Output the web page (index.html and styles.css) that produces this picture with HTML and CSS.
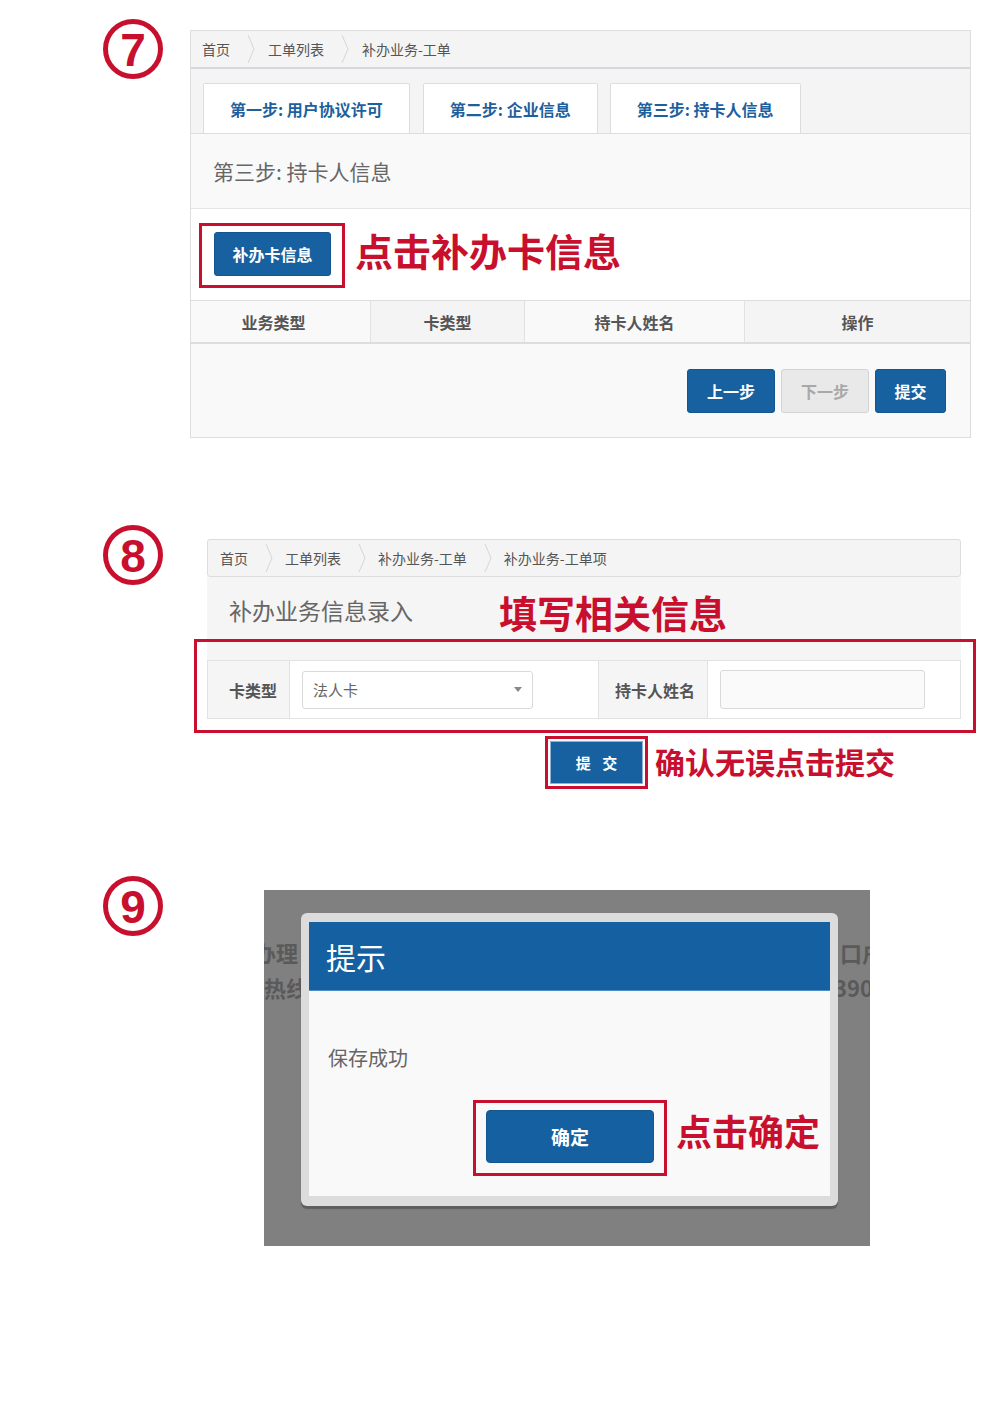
FILE: index.html
```html
<!DOCTYPE html>
<html lang="zh-CN">
<head>
<meta charset="utf-8">
<title>补办业务</title>
<link rel="stylesheet" href="styles.css">
</head>
<body>
<div class="page">

  <section class="step step7">
    <div class="num"><svg width="60" height="60" viewBox="0 0 60 60"><circle cx="30" cy="30" r="27.5" fill="none" stroke="#c8102e" stroke-width="5"/><text x="30" y="46.5" text-anchor="middle">7</text></svg></div>
    <div class="panel">
      <div class="crumb">
        <span>首页</span><svg class="sep" width="8" height="28" viewBox="0 0 8 28"><polyline points="1,0 7,14 1,28" fill="none" stroke="#d6d6d6" stroke-width="1"/></svg><span>工单列表</span><svg class="sep" width="8" height="28" viewBox="0 0 8 28"><polyline points="1,0 7,14 1,28" fill="none" stroke="#d6d6d6" stroke-width="1"/></svg><span>补办业务-工单</span>
      </div>
      <div class="tabs">
        <div class="tab">第一步: 用户协议许可</div>
        <div class="tab">第二步: 企业信息</div>
        <div class="tab">第三步: 持卡人信息</div>
      </div>
      <div class="panel-title">第三步: 持卡人信息</div>
      <div class="action-row">
        <div class="redbox rb1"><button class="btn btn-blue add">补办卡信息</button></div>
        <span class="note note1">点击补办卡信息</span>
      </div>
      <div class="thead">
        <div class="th">业务类型</div><div class="th alt">卡类型</div><div class="th">持卡人姓名</div><div class="th alt">操作</div>
      </div>
      <div class="panel-foot">
        <button class="btn btn-blue w88">上一步</button>
        <button class="btn btn-dis w88">下一步</button>
        <button class="btn btn-blue w71">提交</button>
      </div>
    </div>
  </section>

  <section class="step step8">
    <div class="num"><svg width="60" height="60" viewBox="0 0 60 60"><circle cx="30" cy="30" r="27.5" fill="none" stroke="#c8102e" stroke-width="5"/><text x="30" y="46.5" text-anchor="middle">8</text></svg></div>
    <div class="body8">
      <div class="crumb crumb8">
        <span>首页</span><svg class="sep" width="8" height="28" viewBox="0 0 8 28"><polyline points="1,0 7,14 1,28" fill="none" stroke="#d6d6d6" stroke-width="1"/></svg><span>工单列表</span><svg class="sep" width="8" height="28" viewBox="0 0 8 28"><polyline points="1,0 7,14 1,28" fill="none" stroke="#d6d6d6" stroke-width="1"/></svg><span>补办业务-工单</span><svg class="sep" width="8" height="28" viewBox="0 0 8 28"><polyline points="1,0 7,14 1,28" fill="none" stroke="#d6d6d6" stroke-width="1"/></svg><span>补办业务-工单项</span>
      </div>
      <div class="title8">
        <span class="t">补办业务信息录入</span>
        <span class="note note2">填写相关信息</span>
      </div>
      <div class="redbox rb2">
        <div class="strip"></div>
        <div class="form">
          <div class="lbl">卡类型</div>
          <div class="cell"><div class="select"><span>法人卡</span><i class="caret"></i></div></div>
          <div class="lbl">持卡人姓名</div>
          <div class="cell"><div class="input"></div></div>
        </div>
      </div>
      <div class="submit-row">
        <div class="redbox rb3"><button class="btn btn-blue sub">提 交</button></div>
        <span class="note note3">确认无误点击提交</span>
      </div>
    </div>
  </section>

  <section class="step step9">
    <div class="num"><svg width="60" height="60" viewBox="0 0 60 60"><circle cx="30" cy="30" r="27.5" fill="none" stroke="#c8102e" stroke-width="5"/><text x="30" y="46.5" text-anchor="middle">9</text></svg></div>
    <div class="overlay">
      <div class="bg-col left"><div class="l1">办理</div><div class="l2">热线</div></div>
      <div class="dialog">
        <div class="dhead">提示</div>
        <div class="dbody">
          <div class="msg">保存成功</div>
          <div class="drow">
            <div class="redbox rb4"><button class="btn btn-blue ok">确定</button></div>
            <span class="note note4">点击确定</span>
          </div>
        </div>
      </div>
      <div class="bg-col right"><div class="r1">口户</div><div class="r2">3900</div></div>
    </div>
  </section>

</div>
</body>
</html>
```

FILE: styles.css
```css
* { box-sizing: border-box; }
body {
  margin: 0;
  background: #fff;
  font-family: "Noto Sans CJK SC", "Liberation Sans", sans-serif;
  color: #555;
}
.page { padding: 19px 0 0 103px; height: 1415px; }
.step { display: flex; align-items: flex-start; }
.num { width: 60px; height: 60px; flex: none; }
.num svg { display: block; }
.num text {
  font-family: "Liberation Sans", "DejaVu Sans", sans-serif;
  font-weight: 700;
  font-size: 46px;
  fill: #c8102e;
}

.redbox { border: 3px solid #c8102e; background: #fff; }
.note {
  color: #c8102e;
  font-weight: 700;
  line-height: 1;
  white-space: nowrap;
}

.btn {
  display: flex;
  align-items: center;
  justify-content: center;
  height: 44px;
  padding: 0;
  border: 1px solid transparent;
  border-radius: 3px;
  font-family: "Noto Sans CJK SC", sans-serif;
  font-weight: 700;
  font-size: 16px;
  color: #fff;
}
.btn-blue { background: #1761a1; border-color: #14568f; }
.btn-dis { background: #e9e9e9; border-color: #d3d3d3; color: #a8a8a8; }
.w88 { width: 88px; }
.w71 { width: 71px; }

/* ---------- step 7 ---------- */
.step7 .panel {
  margin: 11px 0 0 27px;
  width: 781px;
  border: 1px solid #ddd;
  background: #f9f9f9;
}
.crumb {
  height: 38px;
  display: flex;
  align-items: center;
  padding-left: 11px;
  background: #f4f4f4;
  border-bottom: 2px solid #d5d9de;
  font-size: 14px;
  color: #555;
}
.sep { display: block; margin: 0 13px 0 17px; flex: none; }
.tabs {
  display: flex;
  gap: 12px;
  padding: 14px 0 0 12px;
  background: #f4f4f4;
  border-bottom: 1px solid #ddd;
}
.tab {
  height: 50px;
  display: flex;
  align-items: center;
  padding: 0 26px;
  background: #fff;
  border: 1px solid #ddd;
  border-bottom: none;
  border-radius: 2px 2px 0 0;
  font-size: 16px;
  font-weight: 700;
  color: #1e5f9e;
}
.tab:nth-child(2) { margin-left: 1px; }
.panel-title {
  height: 75px;
  display: flex;
  align-items: center;
  padding-left: 22px;
  background: #f9f9f9;
  border-bottom: 1px solid #e6e6e6;
  font-size: 21px;
  color: #666;
}
.action-row {
  height: 91px;
  display: flex;
  align-items: flex-start;
  padding: 14px 0 0 8px;
  background: #fff;
}
.rb1 { padding: 6px 11px 9px 12px; }
.add { width: 117px; height: 44px; }
.note1 { font-size: 38px; line-height: 38px; margin: 8px 0 0 10px; }
.thead {
  display: grid;
  grid-template-columns: 179px 154px 220px 1fr;
  border-top: 1px solid #ddd;
  border-bottom: 2px solid #ddd;
  height: 44px;
}
.th {
  display: flex;
  align-items: center;
  justify-content: center;
  background: #f9f9f9;
  font-size: 16px;
  font-weight: 700;
  color: #555;
}
.th:first-child { padding-right: 14px; }
.th + .th { border-left: 1px solid #e2e2e2; }
.th.alt { background: #f4f4f4; }
.panel-foot {
  display: flex;
  justify-content: flex-end;
  gap: 6px;
  padding: 25px 24px 24px 0;
  background: #f9f9f9;
}

/* ---------- step 8 ---------- */
.step8 { margin-top: 87px; }
.body8 { margin: 14px 0 0 31px; width: 782px; }
.crumb8 {
  margin: 0 15px 0 13px;
  height: 38px;
  padding-left: 12px;
  border: 1px solid #ddd;
  border-radius: 3px;
  background: #f4f4f4;
}
.crumb8 .sep { margin: 0 12px 0 17px; }
.title8 {
  margin: 0 15px 0 13px;
  height: 62px;
  display: flex;
  align-items: center;
  padding-left: 22px;
  background: #f5f5f5;
}
.title8 .t { width: 270px; font-size: 23px; color: #666; margin-top: 4px; }
.note2 { font-size: 38px; line-height: 38px; margin-top: 8px; }
.rb2 { padding: 0 12px 11px 10px; }
.strip { height: 18px; background: #f5f5f5; }
.form {
  display: grid;
  grid-template-columns: 81px 309px 109px 1fr;
  height: 59px;
  border: 1px solid #e2e2e2;
  background: #fff;
}
.form > div + div { border-left: 1px solid #e2e2e2; }
.lbl {
  display: flex;
  align-items: center;
  justify-content: flex-end;
  padding-right: 12px;
  background: #f5f5f5;
  font-size: 16px;
  font-weight: 700;
  color: #555;
}
.cell { display: flex; align-items: center; padding-left: 12px; }
.select {
  width: 231px;
  height: 38px;
  display: flex;
  align-items: center;
  justify-content: space-between;
  padding: 0 10px;
  border: 1px solid #d9d9d9;
  border-radius: 3px;
  background: #fff;
  font-size: 15px;
  color: #666;
}
.caret {
  width: 0;
  height: 0;
  border-left: 4px solid transparent;
  border-right: 4px solid transparent;
  border-top: 5px solid #888;
}
.input {
  width: 205px;
  height: 39px;
  border: 1px solid #d9d9d9;
  border-radius: 3px;
  background: #fafafa;
}
.submit-row {
  display: flex;
  align-items: flex-start;
  margin: 3px 0 0 351px;
}
.rb3 { padding: 2px; }
.sub {
  width: 93px;
  height: 43px;
  border-radius: 0;
  border: 1px solid #8db2d6;
  font-size: 15px;
  word-spacing: 8px;
}
.note3 { font-size: 30px; line-height: 30px; margin: 10px 0 0 7px; }

/* ---------- step 9 ---------- */
.step9 { margin-top: 87px; }
.overlay {
  margin: 14px 0 0 101px;
  width: 606px;
  height: 356px;
  display: flex;
  align-items: flex-start;
  background: #808080;
  overflow: hidden;
}
.bg-col {
  flex: none;
  overflow: hidden;
  padding-top: 45px;
  font-size: 22px;
  font-weight: 700;
  line-height: 35px;
  color: #5a5a5a;
  white-space: nowrap;
}
.bg-col.left { width: 37px; }
.bg-col.right { width: 32px; }
.l1 { margin-left: -10px; }
.r1 { margin-left: 2px; }
.r2 { margin-left: -4px; }
.dialog {
  flex: none;
  width: 537px;
  height: 293px;
  margin-top: 23px;
  padding: 9px 8px 10px;
  background: #dcdcdc;
  border-radius: 6px;
  box-shadow: 0 3px 1px #5e5e5e;
}
.dhead {
  height: 69px;
  display: flex;
  align-items: center;
  padding-left: 17px;
  background: #1560a0;
  border-bottom: 1px solid #4d8cc4;
  font-size: 30px;
  color: #fff;
}
.dbody {
  height: 205px;
  padding: 55px 0 0 19px;
  background: #f9f9f9;
}
.msg { font-size: 20px; line-height: 24px; color: #666; }
.drow {
  display: flex;
  align-items: flex-start;
  margin: 30px 0 0 145px;
}
.rb4 { padding: 7px 10px 10px; background: #f9f9f9; }
.ok {
  width: 168px;
  height: 53px;
  border-radius: 4px;
  font-size: 19px;
  background: #1560a0;
}
.note4 { font-size: 36px; line-height: 36px; margin: 12px 0 0 9px; }
```
